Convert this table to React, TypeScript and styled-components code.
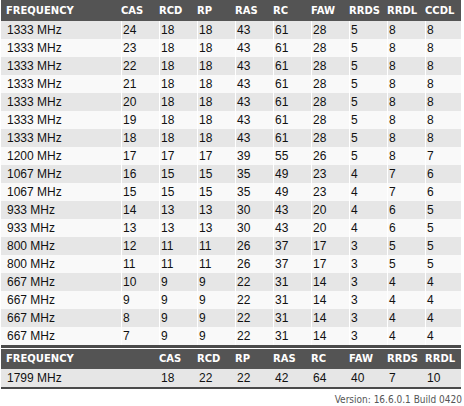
import React from 'react';
import styled, { createGlobalStyle } from 'styled-components';

const GlobalStyle = createGlobalStyle`
  body {
    margin: 0;
    background: #ffffff;
    font-family: 'Liberation Sans', Arial, sans-serif;
  }
`;

const Page = styled.div`
  width: 464px;
  padding-left: 1px;
  box-sizing: border-box;
`;

const Table = styled.div<{ $cols: string }>`
  display: grid;
  grid-template-columns: ${(p) => p.$cols};
  width: 460px;
`;

const First = styled(Table)`
  border-bottom: 3px solid #4a4a4a;
`;

const Second = styled(Table)`
  margin-top: 1px;
  border-bottom: 2px solid #4a4a4a;
`;

const HeadCell = styled.div<{ $first?: boolean; $h: number }>`
  height: ${(p) => p.$h}px;
  line-height: ${(p) => p.$h}px;
  background: #545454;
  color: #ffffff;
  font-family: 'DejaVu Sans', Verdana, sans-serif;
  font-weight: bold;
  font-size: 10px;
  padding-left: ${(p) => (p.$first ? 5 : 0)}px;
  white-space: nowrap;
  overflow: hidden;
`;

const Cell = styled.div<{ $first?: boolean; $odd: boolean; $lines: boolean }>`
  height: 18px;
  line-height: 18px;
  background: ${(p) => (p.$odd ? '#e6e6e6' : '#f9f9f9')};
  color: #111111;
  font-size: 12px;
  padding-left: ${(p) => (p.$first ? 6 : 1)}px;
  border-left: ${(p) => (p.$first ? 'none' : `1px solid ${p.$lines ? '#ffffff' : 'transparent'}`)};
  white-space: nowrap;
`;

const Version = styled.div`
  width: 461px;
  text-align: right;
  margin-top: 5px;
  font-family: 'DejaVu Sans Condensed', 'DejaVu Sans', sans-serif;
  font-size: 10px;
  color: #555555;
`;

const heads = ['FREQUENCY', 'CAS', 'RCD', 'RP', 'RAS', 'RC', 'FAW', 'RRDS', 'RRDL', 'CCDL'];

const rows: (string | number)[][] = [
  ['1333 MHz', 24, 18, 18, 43, 61, 28, 5, 8, 8],
  ['1333 MHz', 23, 18, 18, 43, 61, 28, 5, 8, 8],
  ['1333 MHz', 22, 18, 18, 43, 61, 28, 5, 8, 8],
  ['1333 MHz', 21, 18, 18, 43, 61, 28, 5, 8, 8],
  ['1333 MHz', 20, 18, 18, 43, 61, 28, 5, 8, 8],
  ['1333 MHz', 19, 18, 18, 43, 61, 28, 5, 8, 8],
  ['1333 MHz', 18, 18, 18, 43, 61, 28, 5, 8, 8],
  ['1200 MHz', 17, 17, 17, 39, 55, 26, 5, 8, 7],
  ['1067 MHz', 16, 15, 15, 35, 49, 23, 4, 7, 6],
  ['1067 MHz', 15, 15, 15, 35, 49, 23, 4, 7, 6],
  ['933 MHz', 14, 13, 13, 30, 43, 20, 4, 6, 5],
  ['933 MHz', 13, 13, 13, 30, 43, 20, 4, 6, 5],
  ['800 MHz', 12, 11, 11, 26, 37, 17, 3, 5, 5],
  ['800 MHz', 11, 11, 11, 26, 37, 17, 3, 5, 5],
  ['667 MHz', 10, 9, 9, 22, 31, 14, 3, 4, 4],
  ['667 MHz', 9, 9, 9, 22, 31, 14, 3, 4, 4],
  ['667 MHz', 8, 9, 9, 22, 31, 14, 3, 4, 4],
  ['667 MHz', 7, 9, 9, 22, 31, 14, 3, 4, 4],
];

const xmpHeads = ['FREQUENCY', 'CAS', 'RCD', 'RP', 'RAS', 'RC', 'FAW', 'RRDS', 'RRDL'];
const xmpRow = ['1799 MHz', 18, 22, 22, 42, 64, 40, 7, 10];

export default function App() {
  return (
    <Page>
      <GlobalStyle />
      <First $cols="120px repeat(8, 38px) 36px">
        {heads.map((h, i) => (
          <HeadCell key={h} $first={i === 0} $h={21}>
            {h}
          </HeadCell>
        ))}
        {rows.map((r, ri) =>
          r.map((v, ci) => (
            <Cell key={`${ri}-${ci}`} $first={ci === 0} $odd={ri % 2 === 0} $lines>
              {v}
            </Cell>
          )),
        )}
      </First>
      <Second $cols="158px repeat(7, 38px) 36px">
        {xmpHeads.map((h, i) => (
          <HeadCell key={h} $first={i === 0} $h={20}>
            {h}
          </HeadCell>
        ))}
        {xmpRow.map((v, ci) => (
          <Cell key={ci} $first={ci === 0} $odd $lines={false}>
            {v}
          </Cell>
        ))}
      </Second>
      <Version>Version: 16.6.0.1 Build 0420</Version>
    </Page>
  );
}
